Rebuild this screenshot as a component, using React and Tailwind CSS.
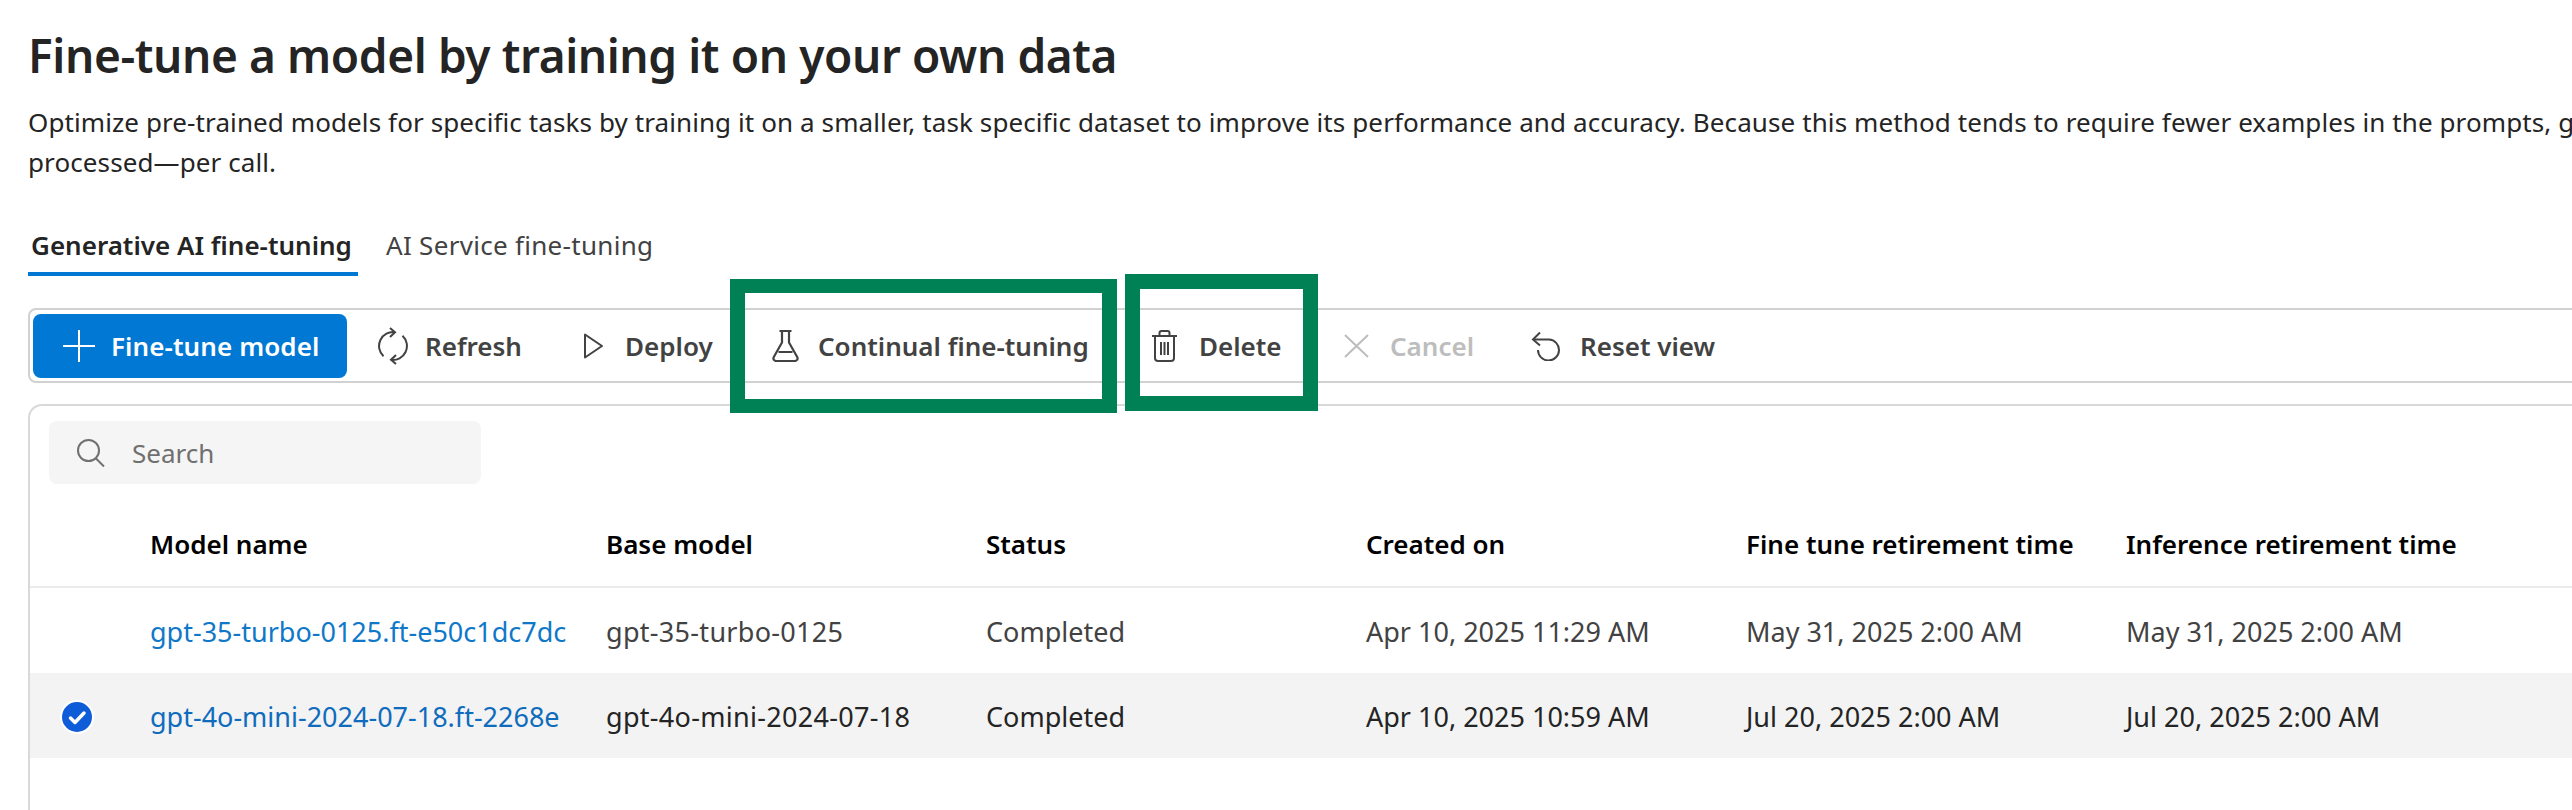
const rows = [
  {
    name: "gpt-35-turbo-0125.ft-e50c1dc7dc",
    base: "gpt-35-turbo-0125",
    status: "Completed",
    created: "Apr 10, 2025 11:29 AM",
    fineTune: "May 31, 2025 2:00 AM",
    inference: "May 31, 2025 2:00 AM",
    selected: false,
  },
  {
    name: "gpt-4o-mini-2024-07-18.ft-2268e",
    base: "gpt-4o-mini-2024-07-18",
    status: "Completed",
    created: "Apr 10, 2025 10:59 AM",
    fineTune: "Jul 20, 2025 2:00 AM",
    inference: "Jul 20, 2025 2:00 AM",
    selected: true,
  },
];

const iconProps = { fill: "none", stroke: "currentColor", strokeWidth: 2 };

const PlusIcon = () => (
  <svg width="34" height="34" viewBox="0 0 34 34" {...iconProps}>
    <path d="M17 1v32M1 17h32" />
  </svg>
);

const RefreshIcon = () => (
  <svg width="30" height="38" viewBox="0 0 30 38" {...iconProps}>
    <path d="M17 5.2A14 14 0 0 0 5.5 29.3" />
    <path d="M13 32.8A14 14 0 0 0 24.5 8.7" />
    <path d="M12 1l5 4.2-5 4.8M18 37l-5-4.2 5-4.8" />
  </svg>
);

const PlayIcon = () => (
  <svg width="19" height="26" viewBox="0 0 19 26" {...iconProps}>
    <path d="M1 1.5v23L18 13z" strokeLinejoin="round" />
  </svg>
);

const FlaskIcon = () => (
  <svg width="27" height="32" viewBox="0 0 27 32" {...iconProps} strokeWidth="2.2">
    <path d="M7.5 1h12M10 1v11.5L1.8 27c-1 2 0 4 2.7 4h18c2.700 0 3.700-2 2.700-4L17 12.500V1M6.500 22h14" strokeLinejoin="round" />
  </svg>
);

const TrashIcon = () => (
  <svg width="25" height="32" viewBox="0 0 25 32" {...iconProps}>
    <path d="M0 6h25M7.500 6V3c0-1 .7-2 2-2h6c1.300 0 2 1 2 2v3M3 6v22c0 2 1 3 3 3h13c2 0 3-1 3-3V6" />
    <path d="M9 12v13M12.500 12v13M16 12v13" />
  </svg>
);

const CloseIcon = () => (
  <svg width="25" height="24" viewBox="0 0 25 24" {...iconProps}>
    <path d="M1 1l23 22M24 1L1 23" />
  </svg>
);

const ResetIcon = () => (
  <svg width="30" height="30" viewBox="0 0 30 30" {...iconProps}>
    <path d="M2 8.500h16a10.500 10.500 0 1 1-11 10.500" />
    <path d="M9 1.500L2 8.500l7 6" />
  </svg>
);

const SearchIcon = () => (
  <svg width="28" height="28" viewBox="0 0 28 28" {...iconProps}>
    <circle cx="11.500" cy="11.500" r="10.500" />
    <path d="M18.500 19L27 27.500" />
  </svg>
);

const CheckIcon = () => (
  <svg width="34" height="34" viewBox="0 0 34 34">
    <circle cx="17" cy="17" r="16" fill="#0f5cd8" stroke="#fff" strokeWidth="2" />
    <path d="M10.500 18l4.500 4.500 9-9.500" fill="none" stroke="#fff" strokeWidth="3.500" strokeLinecap="round" strokeLinejoin="round" />
  </svg>
);

const ToolbarButton = ({ width, gap, icon, label, disabled }) => (
  <button
    className={`flex shrink-0 items-center font-semibold ${width} ${
      disabled ? "text-[#bdbdbd]" : "text-[#424242]"
    }`}
  >
    <span className={`flex shrink-0 items-center ${gap}`}>{icon}</span>
    <span className="whitespace-nowrap pt-[2px]">{label}</span>
  </button>
);

const GRID = "grid grid-cols-[120px_456px_380px_380px_380px_380px_1fr] items-center";

export default function App() {
  return (
    <div className="relative h-[810px] w-[2572px] overflow-hidden bg-white pl-[28px] pt-[28px] font-['Noto_Sans',sans-serif] text-[26px] text-[#242424]">
      <h1 className="h-[54px] text-[46px] font-semibold leading-[54px] tracking-[-0.4px]">
        Fine-tune a model by training it on your own data
      </h1>
      <p className="mt-[20px] h-[82px] w-[2900px] leading-[40px] tracking-[0.1px]">
        Optimize pre-trained models for specific tasks by training it on a smaller, task specific dataset to improve its performance and accuracy. Because this method tends to require fewer examples in the prompts, generally fewer tokens are
        <br />
        processed—per call.
      </p>

      <div className="mt-[45px] flex h-[47px] items-start">
        <div className="h-[47px] w-[330px] border-b-4 border-[#0078d4] pl-[3px] font-semibold leading-[32px]">
          Generative AI fine-tuning
        </div>
        <div className="ml-[28px] leading-[32px] tracking-[0.3px] text-[#424242]">AI Service fine-tuning</div>
      </div>

      <div className="mt-[32px] flex h-[75px] w-[2600px] items-center rounded-[8px] border-2 border-[#d1d1d1] pl-[3px]">
        <button className="flex h-[64px] w-[314px] shrink-0 items-center rounded-[8px] bg-[#0078d4] pl-[29px] font-semibold tracking-[0.1px] text-white">
          <span className="flex w-[49px] shrink-0"><PlusIcon /></span>
          <span className="whitespace-nowrap pt-[2px]">Fine-tune model</span>
        </button>
        <div className="ml-[31px] flex items-center">
          <ToolbarButton width="w-[206px]" gap="w-[47px]" icon={<RefreshIcon />} label="Refresh" />
          <ToolbarButton width="w-[188px]" gap="w-[41px]" icon={<PlayIcon />} label="Deploy" />
          <ToolbarButton width="w-[380px]" gap="w-[46px]" icon={<FlaskIcon />} label="Continual fine-tuning" />
          <ToolbarButton width="w-[192px]" gap="w-[47px]" icon={<TrashIcon />} label="Delete" />
          <ToolbarButton width="w-[187px]" gap="w-[46px]" icon={<CloseIcon />} label="Cancel" disabled />
          <ToolbarButton width="w-[200px]" gap="w-[49px]" icon={<ResetIcon />} label="Reset view" />
        </div>
      </div>

      <div className="mt-[21px] h-[500px] w-[2600px] rounded-tl-[14px] border-l-2 border-t-2 border-[#d9d9d9] pt-[15px]">
        <div className="ml-[19px] flex h-[63px] w-[432px] items-center rounded-[8px] bg-[#f5f5f5] pl-[28px] text-[#707070]">
          <span className="flex w-[55px] shrink-0"><SearchIcon /></span>
          <span className="pt-[2px]">Search</span>
        </div>

        <div className={`${GRID} mt-[18px] h-[86px] border-b-2 border-[#ebebeb] font-semibold text-black`}>
          <span />
          <span>Model name</span>
          <span>Base model</span>
          <span>Status</span>
          <span>Created on</span>
          <span>Fine tune retirement time</span>
          <span>Inference retirement time</span>
        </div>

        {rows.map((row) => (
          <div
            key={row.name}
            className={`${GRID} h-[85px] pt-[3px] text-[27px] ${row.selected ? "bg-[#f3f3f3] text-[#242424]" : "text-[#424242]"}`}
          >
            <span className="flex pl-[30px]">{row.selected && <CheckIcon />}</span>
            <span className={row.selected ? "text-[#0f6cbd]" : "text-[#0f78c8]"}>{row.name}</span>
            <span className="tracking-[0.3px]">{row.base}</span>
            <span>{row.status}</span>
            <span>{row.created}</span>
            <span>{row.fineTune}</span>
            <span>{row.inference}</span>
          </div>
        ))}
      </div>

      {/* green highlight boxes drawn over the toolbar */}
      <div className="absolute left-[730px] top-[279px] h-[134px] w-[387px] border-x-[15px] border-y-[14px] border-[#008055]" />
      <div className="absolute left-[1125px] top-[274px] h-[137px] w-[193px] border-x-[15px] border-y-[15px] border-[#008055]" />
    </div>
  );
}
